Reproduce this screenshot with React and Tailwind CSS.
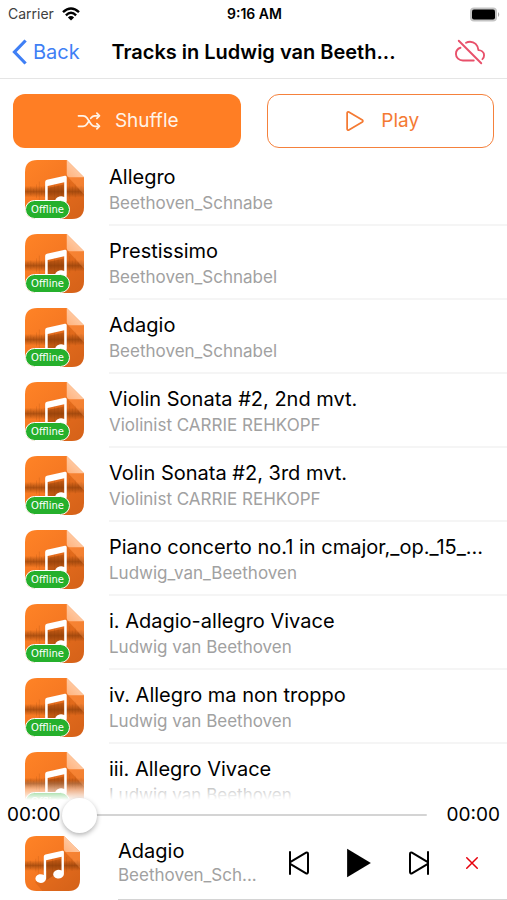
import {
  IoCloseOutline,
  IoCloudOfflineOutline,
  IoPlayOutline,
  IoPlaySharp,
  IoPlaySkipBackOutline,
  IoPlaySkipForwardOutline,
  IoShuffleOutline,
} from 'react-icons/io5';

const tracks = [
  { title: 'Allegro', artist: 'Beethoven_Schnabe' },
  { title: 'Prestissimo', artist: 'Beethoven_Schnabel' },
  { title: 'Adagio', artist: 'Beethoven_Schnabel' },
  { title: 'Violin Sonata #2, 2nd mvt.', artist: 'Violinist CARRIE REHKOPF' },
  { title: 'Volin Sonata #2, 3rd mvt.', artist: 'Violinist CARRIE REHKOPF' },
  { title: 'Piano concerto no.1 in cmajor,_op._15_...', artist: 'Ludwig_van_Beethoven' },
  { title: 'i. Adagio-allegro Vivace', artist: 'Ludwig van Beethoven' },
  { title: 'iv. Allegro ma non troppo', artist: 'Ludwig van Beethoven' },
  { title: 'iii. Allegro Vivace', artist: 'Ludwig van Beethoven' },
];

function Artwork({ id, className }) {
  return (
    <svg viewBox="0 0 164 164" className={className} aria-hidden="true">
      <defs>
        <linearGradient id={`${id}-bg`} x1="0" y1="0" x2="0.9" y2="1">
          <stop offset="0" stopColor="#ff8326" />
          <stop offset="0.55" stopColor="#f47722" />
          <stop offset="1" stopColor="#e06a1e" />
        </linearGradient>
        <linearGradient id={`${id}-band`} x1="0" y1="0" x2="0" y2="1">
          <stop offset="0" stopColor="#8a3c08" stopOpacity="0" />
          <stop offset="0.5" stopColor="#8a3c08" stopOpacity="0.65" />
          <stop offset="1" stopColor="#8a3c08" stopOpacity="0" />
        </linearGradient>
        <linearGradient id={`${id}-fold`} x1="0" y1="1" x2="1" y2="0">
          <stop offset="0" stopColor="#ffb27c" />
          <stop offset="1" stopColor="#ffdcc2" />
        </linearGradient>
        <clipPath id={`${id}-clip`}>
          <path d="M34 0H116L164 48V130Q164 164 130 164H34Q0 164 0 130V34Q0 0 34 0Z" />
        </clipPath>
      </defs>
      <g clipPath={`url(#${id}-clip)`}>
        <rect width="164" height="164" fill={`url(#${id}-bg)`} />
        <path d="M116 44L164 92V164H52L30 138L60 110V58Z" fill="#b94f0d" opacity="0.28" />
        <rect y="72" width="164" height="32" fill={`url(#${id}-band)`} />
        <path
          d="M8 78V94M16 74V98M24 80V92M32 68V106M40 60V112M46 76V98M54 72V102M64 66V104M72 74V98M82 62V110M92 70V104M102 74V100M124 62V108M132 74V98M140 66V104M148 78V94M156 72V100"
          stroke="#8a3c08"
          strokeWidth="2"
          opacity="0.22"
        />
        <path d="M64 78L108 68V102L64 132Z" fill="#8a3c08" opacity="0.4" />
        <path d="M116 44L164 96V48Z" fill="#ff9a52" opacity="0.35" />
        <path d="M116 0V38Q116 48 126 48H164Z" fill={`url(#${id}-fold)`} />
      </g>
      <path
        d="M56 61Q56 56 61 55L111 44Q116 43 116 48V114A16 13 0 1 1 109 103V62L63 72V127A16 13 0 1 1 56 116Z"
        fill="#fff"
      />
    </svg>
  );
}

function StatusBar() {
  return (
    <div className="grid h-7 grid-cols-3 items-center pr-1.5 pl-2 text-sm">
      <div className="flex items-center gap-2 text-neutral-700">
        Carrier
        <svg viewBox="0 0 18 14" className="h-3.5 w-4.5" fill="none" stroke="#000" strokeWidth="2.4" aria-hidden="true">
          <path d="M1 5.2Q9 -2.4 17 5.2" />
          <path d="M3.9 8.3Q9 3.4 14.1 8.3" />
          <path d="M9 13.4L5.9 10.4Q9 7.8 12.1 10.4Z" fill="#000" stroke="none" />
        </svg>
      </div>
      <div className="text-center font-semibold">9:16 AM</div>
      <svg viewBox="0 0 31 15" className="h-3.75 w-8 justify-self-end" aria-hidden="true">
        <rect x="0.5" y="0.5" width="27" height="14" rx="4" fill="#c4c4c4" />
        <rect x="2.5" y="2.5" width="23" height="10" rx="2" fill="#000" />
        <path d="M28.5 5Q31 7.5 28.5 10Z" fill="#a8a8a8" />
      </svg>
    </div>
  );
}

function NavBar() {
  return (
    <header className="grid h-[51px] grid-cols-[80px_1fr_80px] items-center border-b border-neutral-200 px-3 pb-0.5">
      <a href="#back" className="flex items-center gap-1.5 text-xl text-[#3f7ff5]">
        <svg viewBox="0 0 15 26" className="h-6.5 w-3.75" fill="none" stroke="currentColor" strokeWidth="3.2" aria-hidden="true">
          <path d="M13.6 1.5L2.5 13L13.6 24.5" />
        </svg>
        Back
      </a>
      <h1 className="truncate text-center text-xl font-semibold">Tracks in Ludwig van Beeth...</h1>
      <button type="button" aria-label="Offline mode" className="mr-2.5 justify-self-end text-[#e8506a]">
        <IoCloudOfflineOutline className="size-[30px]" />
      </button>
    </header>
  );
}

function TrackRow({ track, index }) {
  return (
    <li className="flex h-[74px] items-center pl-[25px]">
      <div className="relative size-[59px] shrink-0">
        <Artwork id={`track-${index}`} className="size-full" />
        <span className="absolute bottom-0 left-0 flex h-[19px] w-[45px] items-center justify-center rounded-full border border-white bg-[#25b02c] font-['DejaVu_Sans',sans-serif] text-[10px] text-white">
          Offline
        </span>
      </div>
      <div className="ml-[25px] flex h-full min-w-0 flex-1 flex-col justify-center border-b-2 border-neutral-100 pt-0.5">
        <p className="truncate text-xl leading-7">{track.title}</p>
        <p className="truncate text-[17px] leading-6 text-neutral-400">{track.artist}</p>
      </div>
    </li>
  );
}

function Player() {
  return (
    <footer className="relative bg-white">
      <div className="pointer-events-none absolute inset-x-0 bottom-full h-5 bg-linear-to-t from-white to-transparent" />
      <div className="relative flex h-[30px] items-center px-[7px] text-[19px]">
        <span>00:00</span>
        <input
          type="range"
          min="0"
          max="100"
          defaultValue="0"
          aria-label="Position"
          className="mr-5 ml-0.5 h-9 min-w-0 flex-1 appearance-none bg-transparent [&::-webkit-slider-runnable-track]:h-0.5 [&::-webkit-slider-runnable-track]:rounded-full [&::-webkit-slider-runnable-track]:bg-neutral-300 [&::-webkit-slider-thumb]:-mt-4 [&::-webkit-slider-thumb]:size-[35px] [&::-webkit-slider-thumb]:appearance-none [&::-webkit-slider-thumb]:rounded-full [&::-webkit-slider-thumb]:bg-white [&::-webkit-slider-thumb]:shadow-[0_2px_5px_rgba(0,0,0,0.3)]"
        />
        <span>00:00</span>
      </div>
      <div className="flex h-[70px] pl-[25px]">
        <Artwork id="now-playing" className="mt-1.5 size-[55px] shrink-0" />
        <div className="ml-[38px] flex min-w-0 flex-1 items-center border-b border-neutral-300 pb-1">
          <div className="min-w-0 flex-1">
            <p className="truncate text-xl leading-6">Adagio</p>
            <p className="truncate text-[17px] leading-6 text-neutral-400">Beethoven_Sch...</p>
          </div>
          <div className="mr-[23px] flex shrink-0 items-center gap-[25px]">
            <button type="button" aria-label="Previous">
              <IoPlaySkipBackOutline className="size-8" />
            </button>
            <button type="button" aria-label="Play track">
              <IoPlaySharp className="size-[38px]" />
            </button>
            <button type="button" aria-label="Next">
              <IoPlaySkipForwardOutline className="size-8" />
            </button>
            <button type="button" aria-label="Close player" className="text-red-600">
              <IoCloseOutline className="size-6" />
            </button>
          </div>
        </div>
      </div>
    </footer>
  );
}

export default function App() {
  return (
    <div className="flex h-screen flex-col overflow-hidden bg-white font-[Inter,sans-serif] text-black">
      <StatusBar />
      <NavBar />
      <div className="grid grid-cols-2 gap-[26px] px-[13px] pt-[15px] text-[19px]">
        <button type="button" className="flex h-[54px] items-center justify-center gap-3 rounded-xl bg-[#ff7e24] text-[#fff3e8]">
          <IoShuffleOutline className="size-7" />
          Shuffle
        </button>
        <button type="button" className="flex h-[54px] items-center justify-center gap-3 rounded-xl border border-[#f5813c] text-[#f47a33]">
          <IoPlayOutline className="size-7" />
          Play
        </button>
      </div>
      <ul className="mt-1 min-h-0 flex-1 overflow-hidden">
        {tracks.map((track, index) => (
          <TrackRow key={index} track={track} index={index} />
        ))}
      </ul>
      <Player />
    </div>
  );
}
